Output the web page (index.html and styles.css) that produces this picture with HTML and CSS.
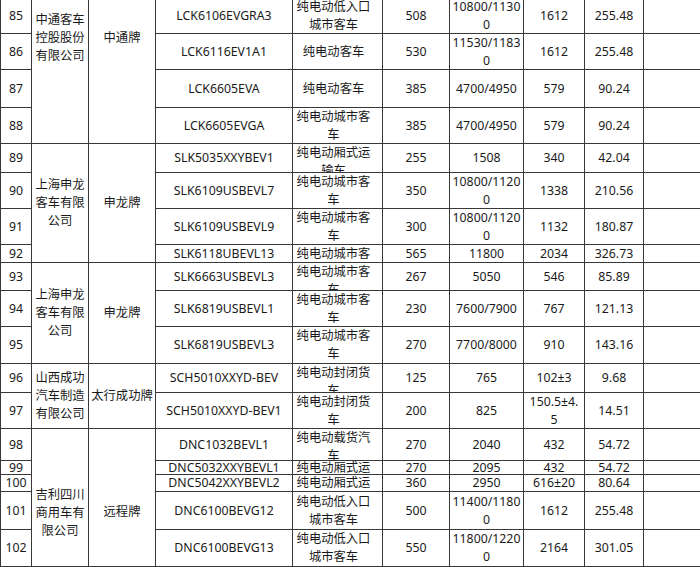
FILE: index.html
```html
<!DOCTYPE html>
<html lang="zh-CN">
<head>
<meta charset="utf-8">
<title>车型目录</title>
<link rel="stylesheet" href="styles.css">
</head>
<body>
<div class="sheet">
  <div class="c">85</div>
  <div class="c co zt r4">中通客车<br>控股股份<br>有限公司</div>
  <div class="c br ztb r4">中通牌</div>
  <div class="c">LCK6106EVGRA3</div>
  <div class="c d">纯电动低入口<br>城市客车</div>
  <div class="c">508</div>
  <div class="c w">10800/1130<br>0</div>
  <div class="c">1612</div>
  <div class="c">255.48</div>
  <div class="c"></div>

  <div class="c">86</div>
  <div class="c">LCK6116EV1A1</div>
  <div class="c d">纯电动客车</div>
  <div class="c">530</div>
  <div class="c w">11530/1183<br>0</div>
  <div class="c">1612</div>
  <div class="c">255.48</div>
  <div class="c"></div>

  <div class="c">87</div>
  <div class="c">LCK6605EVA</div>
  <div class="c d">纯电动客车</div>
  <div class="c">385</div>
  <div class="c">4700/4950</div>
  <div class="c">579</div>
  <div class="c">90.24</div>
  <div class="c"></div>

  <div class="c">88</div>
  <div class="c">LCK6605EVGA</div>
  <div class="c d">纯电动城市客<br>车</div>
  <div class="c">385</div>
  <div class="c">4700/4950</div>
  <div class="c">579</div>
  <div class="c">90.24</div>
  <div class="c"></div>

  <div class="c">89</div>
  <div class="c co r4">上海申龙<br>客车有限<br>公司</div>
  <div class="c br r4">申龙牌</div>
  <div class="c">SLK5035XXYBEV1</div>
  <div class="c d">纯电动厢式运<br>输车</div>
  <div class="c">255</div>
  <div class="c">1508</div>
  <div class="c">340</div>
  <div class="c">42.04</div>
  <div class="c"></div>

  <div class="c">90</div>
  <div class="c">SLK6109USBEVL7</div>
  <div class="c d">纯电动城市客<br>车</div>
  <div class="c">350</div>
  <div class="c w">10800/1120<br>0</div>
  <div class="c">1338</div>
  <div class="c">210.56</div>
  <div class="c"></div>

  <div class="c">91</div>
  <div class="c">SLK6109USBEVL9</div>
  <div class="c d">纯电动城市客<br>车</div>
  <div class="c">300</div>
  <div class="c w">10800/1120<br>0</div>
  <div class="c">1132</div>
  <div class="c">180.87</div>
  <div class="c"></div>

  <div class="c">92</div>
  <div class="c">SLK6118UBEVL13</div>
  <div class="c d lh17">纯电动城市客<br>车</div>
  <div class="c">565</div>
  <div class="c">11800</div>
  <div class="c">2034</div>
  <div class="c">326.73</div>
  <div class="c"></div>

  <div class="c">93</div>
  <div class="c co r3">上海申龙<br>客车有限<br>公司</div>
  <div class="c br r3">申龙牌</div>
  <div class="c">SLK6663USBEVL3</div>
  <div class="c d">纯电动城市客<br>车</div>
  <div class="c">267</div>
  <div class="c">5050</div>
  <div class="c">546</div>
  <div class="c">85.89</div>
  <div class="c"></div>

  <div class="c">94</div>
  <div class="c">SLK6819USBEVL1</div>
  <div class="c d">纯电动城市客<br>车</div>
  <div class="c">230</div>
  <div class="c">7600/7900</div>
  <div class="c">767</div>
  <div class="c">121.13</div>
  <div class="c"></div>

  <div class="c">95</div>
  <div class="c">SLK6819USBEVL3</div>
  <div class="c d">纯电动城市客<br>车</div>
  <div class="c">270</div>
  <div class="c">7700/8000</div>
  <div class="c">910</div>
  <div class="c">143.16</div>
  <div class="c"></div>

  <div class="c">96</div>
  <div class="c co r2">山西成功<br>汽车制造<br>有限公司</div>
  <div class="c br r2">太行成功牌</div>
  <div class="c">SCH5010XXYD-BEV</div>
  <div class="c d">纯电动封闭货<br>车</div>
  <div class="c">125</div>
  <div class="c">765</div>
  <div class="c">102±3</div>
  <div class="c">9.68</div>
  <div class="c"></div>

  <div class="c">97</div>
  <div class="c">SCH5010XXYD-BEV1</div>
  <div class="c d">纯电动封闭货<br>车</div>
  <div class="c">200</div>
  <div class="c">825</div>
  <div class="c w">150.5±4.<br>5</div>
  <div class="c">14.51</div>
  <div class="c"></div>

  <div class="c">98</div>
  <div class="c co jl r5">吉利四川<br>商用车有<br>限公司</div>
  <div class="c br jlb r5">远程牌</div>
  <div class="c">DNC1032BEVL1</div>
  <div class="c d">纯电动载货汽<br>车</div>
  <div class="c">270</div>
  <div class="c">2040</div>
  <div class="c">432</div>
  <div class="c">54.72</div>
  <div class="c"></div>

  <div class="c">99</div>
  <div class="c">DNC5032XXYBEVL1</div>
  <div class="c d lh13">纯电动厢式运<br>输车</div>
  <div class="c">270</div>
  <div class="c">2095</div>
  <div class="c">432</div>
  <div class="c">54.72</div>
  <div class="c"></div>

  <div class="c">100</div>
  <div class="c">DNC5042XXYBEVL2</div>
  <div class="c d lh16">纯电动厢式运<br>输车</div>
  <div class="c">360</div>
  <div class="c">2950</div>
  <div class="c">616±20</div>
  <div class="c">80.64</div>
  <div class="c"></div>

  <div class="c">101</div>
  <div class="c">DNC6100BEVG12</div>
  <div class="c d">纯电动低入口<br>城市客车</div>
  <div class="c">500</div>
  <div class="c w">11400/1180<br>0</div>
  <div class="c">1612</div>
  <div class="c">255.48</div>
  <div class="c"></div>

  <div class="c">102</div>
  <div class="c">DNC6100BEVG13</div>
  <div class="c d">纯电动低入口<br>城市客车</div>
  <div class="c">550</div>
  <div class="c w">11800/1220<br>0</div>
  <div class="c">2164</div>
  <div class="c">301.05</div>
  <div class="c"></div>
</div>
</body>
</html>
```

FILE: styles.css
```css
html, body {
  margin: 0;
  padding: 0;
  overflow: hidden;
  background: #ffffff;
}

.sheet {
  display: grid;
  grid-template-columns: 30px 56px 66px 136px 89px 66px 73px 60px 58px 80px;
  grid-template-rows: 35px 35px 37px 35px 28px 35px 35px 17px 27px 35px 36px 28px 35px 31px 13px 16px 37px 36px;
  gap: 1px;
  padding: 1px;
  width: max-content;
  margin-top: -3px;
  background: #383838;
  font-family: "Noto Sans", "Noto Sans CJK SC", sans-serif;
  font-size: 12.3px;
  line-height: 18px;
  color: #1a1a1a;
}

.c {
  background: #ffffff;
  display: flex;
  align-items: center;
  justify-content: center;
  text-align: center;
  overflow: hidden;
  white-space: nowrap;
}

.d,
.w {
  align-items: safe center;
}

.d {
  padding-right: 8px;
}

.lh17 { align-items: flex-start; line-height: 17px; }
.lh16 { align-items: flex-start; line-height: 16px; }
.lh13 { align-items: flex-start; line-height: 13px; }

.r2 { grid-row: span 2; }
.r3 { grid-row: span 3; }
.r4 { grid-row: span 4; }
.r5 { grid-row: span 5; }

.zt {
  align-items: flex-start;
  padding-top: 13px;
}

.ztb {
  align-items: flex-start;
  padding-top: 31px;
}

.jl {
  align-items: flex-start;
  padding-top: 57px;
}

.jlb {
  align-items: flex-start;
  padding-top: 74px;
}
```
